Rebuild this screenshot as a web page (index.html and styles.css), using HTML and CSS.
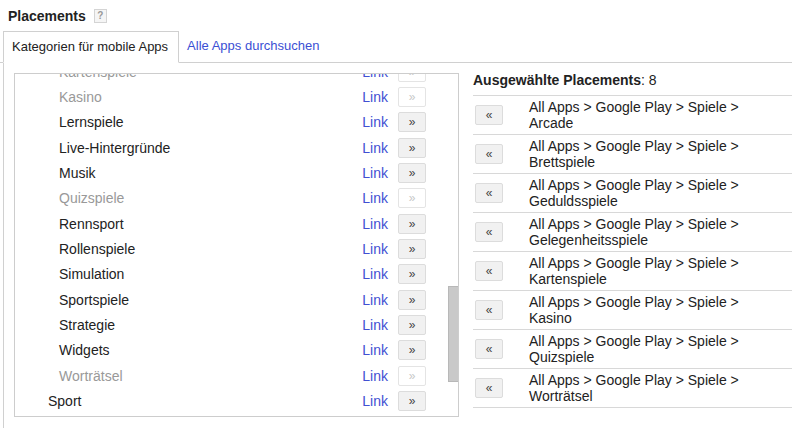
FILE: index.html
```html
<!DOCTYPE html>
<html lang="de">
<head>
    <meta charset="UTF-8">
    <title>Placements</title>
    <link rel="stylesheet" href="styles.css">
</head>
<body>

<div class="section-title">
    <h2>Placements</h2>
    <span class="help">?</span>
</div>

<div class="tabs">
    <a class="tab active">Kategorien für mobile Apps</a>
    <a class="tab">Alle Apps durchsuchen</a>
</div>

<div class="tab-panel">
    <div class="picker">
        <div class="picker-list">
            <div class="cat-row sub disabled"><span class="cat-name">Kartenspiele</span><a class="cat-link">Link</a><button class="add-btn">&raquo;</button></div>
            <div class="cat-row sub disabled"><span class="cat-name">Kasino</span><a class="cat-link">Link</a><button class="add-btn">&raquo;</button></div>
            <div class="cat-row sub"><span class="cat-name">Lernspiele</span><a class="cat-link">Link</a><button class="add-btn">&raquo;</button></div>
            <div class="cat-row sub"><span class="cat-name">Live-Hintergründe</span><a class="cat-link">Link</a><button class="add-btn">&raquo;</button></div>
            <div class="cat-row sub"><span class="cat-name">Musik</span><a class="cat-link">Link</a><button class="add-btn">&raquo;</button></div>
            <div class="cat-row sub disabled"><span class="cat-name">Quizspiele</span><a class="cat-link">Link</a><button class="add-btn">&raquo;</button></div>
            <div class="cat-row sub"><span class="cat-name">Rennsport</span><a class="cat-link">Link</a><button class="add-btn">&raquo;</button></div>
            <div class="cat-row sub"><span class="cat-name">Rollenspiele</span><a class="cat-link">Link</a><button class="add-btn">&raquo;</button></div>
            <div class="cat-row sub"><span class="cat-name">Simulation</span><a class="cat-link">Link</a><button class="add-btn">&raquo;</button></div>
            <div class="cat-row sub"><span class="cat-name">Sportspiele</span><a class="cat-link">Link</a><button class="add-btn">&raquo;</button></div>
            <div class="cat-row sub"><span class="cat-name">Strategie</span><a class="cat-link">Link</a><button class="add-btn">&raquo;</button></div>
            <div class="cat-row sub"><span class="cat-name">Widgets</span><a class="cat-link">Link</a><button class="add-btn">&raquo;</button></div>
            <div class="cat-row sub disabled"><span class="cat-name">Worträtsel</span><a class="cat-link">Link</a><button class="add-btn">&raquo;</button></div>
            <div class="cat-row"><span class="cat-name">Sport</span><a class="cat-link">Link</a><button class="add-btn">&raquo;</button></div>
            <div class="cat-row"><span class="cat-name">Tools</span><a class="cat-link">Link</a><button class="add-btn">&raquo;</button></div>
        </div>
        <div class="scroll-thumb"></div>
    </div>

    <div class="selected">
        <div class="selected-title"><b>Ausgewählte Placements</b>: 8</div>
        <div class="sel-row"><button class="remove-btn">&laquo;</button><span class="sel-path">All Apps &gt; Google Play &gt; Spiele &gt; Arcade</span></div>
        <div class="sel-row"><button class="remove-btn">&laquo;</button><span class="sel-path">All Apps &gt; Google Play &gt; Spiele &gt; Brettspiele</span></div>
        <div class="sel-row"><button class="remove-btn">&laquo;</button><span class="sel-path">All Apps &gt; Google Play &gt; Spiele &gt; Geduldsspiele</span></div>
        <div class="sel-row"><button class="remove-btn">&laquo;</button><span class="sel-path">All Apps &gt; Google Play &gt; Spiele &gt; Gelegenheitsspiele</span></div>
        <div class="sel-row"><button class="remove-btn">&laquo;</button><span class="sel-path">All Apps &gt; Google Play &gt; Spiele &gt; Kartenspiele</span></div>
        <div class="sel-row"><button class="remove-btn">&laquo;</button><span class="sel-path">All Apps &gt; Google Play &gt; Spiele &gt; Kasino</span></div>
        <div class="sel-row"><button class="remove-btn">&laquo;</button><span class="sel-path">All Apps &gt; Google Play &gt; Spiele &gt; Quizspiele</span></div>
        <div class="sel-row"><button class="remove-btn">&laquo;</button><span class="sel-path">All Apps &gt; Google Play &gt; Spiele &gt; Worträtsel</span></div>
    </div>
</div>

</body>
</html>
```

FILE: styles.css
```css
body {
    margin: 0;
    font-family: Arial, "Liberation Sans", sans-serif;
    font-size: 14px;
    color: #222;
    background-color: #fff;
    overflow: hidden;
}
.section-title {
    display: flex;
    align-items: center;
    height: 31px;
    padding-left: 8px;
}
.section-title h2 {
    margin: 0;
    font-size: 14px;
    font-weight: bold;
    color: #222;
}
.help {
    display: inline-block;
    width: 11px;
    height: 12px;
    margin-left: 8px;
    border: 1px solid #d4d4d4;
    background-color: #f5f5f5;
    color: #999;
    font-size: 10px;
    font-weight: bold;
    line-height: 12px;
    text-align: center;
}
.tabs {
    display: flex;
    height: 31px;
    border-bottom: 1px solid #d0d0d0;
    padding-left: 3px;
}
.tab {
    font-size: 13px;
    line-height: 29px;
    padding: 0 10px 0 8px;
    color: #3b4fd4;
    cursor: pointer;
}
.tab.active {
    color: #222;
    background-color: #fff;
    border: 1px solid #d0d0d0;
    border-bottom: 1px solid #fff;
    margin-bottom: -1px;
    height: 30px;
}
.tab-panel {
    display: flex;
    margin-left: 3px;
    border-left: 1px solid #d0d0d0;
    padding: 10px 0 0 10px;
    height: 355px;
}
.picker {
    position: relative;
    width: 443px;
    height: 342px;
    border: 1px solid #cdcdcd;
    overflow: hidden;
    flex-shrink: 0;
}
.picker-list {
    margin-top: -15px;
}
.cat-row {
    display: flex;
    align-items: center;
    height: 25.33px;
    padding: 0 32px 0 33px;
}
.cat-row.sub {
    padding-left: 44px;
}
.cat-name {
    flex: 1;
}
.cat-row.disabled .cat-name {
    color: #999;
}
.cat-link {
    color: #4150d2;
    cursor: pointer;
    margin-right: 10px;
}
.add-btn, .remove-btn {
    width: 28px;
    height: 20px;
    padding: 0;
    border: 1px solid #dcdcdc;
    border-radius: 2px;
    background-color: #f1f1f1;
    color: #444;
    font-family: Arial, "Liberation Sans", sans-serif;
    font-size: 12px;
    line-height: 16px;
    cursor: pointer;
}
.cat-row.disabled .add-btn {
    background-color: #fff;
    border-color: #e4e4e4;
    color: #c8c8c8;
}
.scroll-thumb {
    position: absolute;
    top: 212px;
    right: 0;
    width: 9px;
    height: 94px;
    background-color: #c9c9c9;
    border: 1px solid #b8b8b8;
    border-right: none;
}
.selected {
    flex: 1;
    margin-left: 14px;
}
.selected-title {
    height: 22px;
    line-height: 14px;
    border-bottom: 1px solid #d8d8d8;
}
.sel-row {
    display: flex;
    align-items: center;
    height: 38px;
    border-bottom: 1px solid #d8d8d8;
}
.remove-btn {
    margin-left: 2px;
    flex-shrink: 0;
}
.sel-path {
    width: 230px;
    margin-left: 26px;
    line-height: 16px;
}
```
